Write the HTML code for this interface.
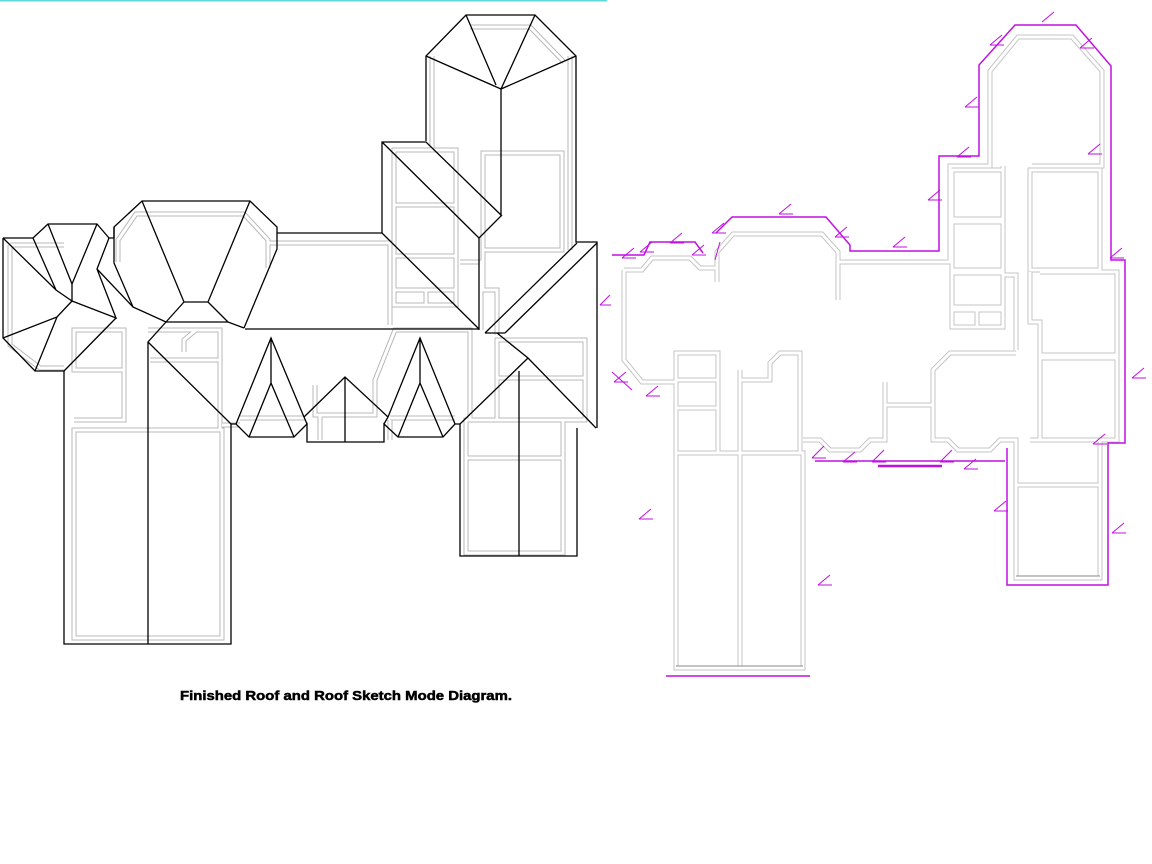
<!DOCTYPE html>
<html><head><meta charset="utf-8"><style>html,body{margin:0;padding:0;background:#fff;}svg{display:block}</style></head>
<body>
<svg width="1152" height="864" viewBox="0 0 1152 864" xmlns="http://www.w3.org/2000/svg">
<rect x="0" y="0" width="607" height="1.5" fill="#5fd8d8"/>

<!-- LEFT: gray plan under roof (double lines) -->
<g fill="none" stroke-linejoin="miter">
 <g stroke="#b8b8b8" stroke-width="5">
  <path d="M10,245 H64 M10,245 V345 L40,368 H64"/>
  <path d="M118,262 V240 L136,214 H244 L268,240 V268"/>
  <path d="M268,243 H390 V325"/>
  <path d="M74,330 H124 V370 H74 Z M74,370 H124 V420 H74 M74,420 H124"/>
  <path d="M148,330 H220 V430 M184,352 V340 L196,330 M150,360 H220"/>
  <path d="M74,430 H222 V638 H74 Z"/>
  <path d="M394,150 H456 V305 H394 Z M394,205 H456 M394,256 H456 M394,290 H456 M426,290 V305"/>
  <path d="M483,153 H562 V250 H483 Z M483,250 V290 H497 V335"/>
  <path d="M460,262 H481 V330"/>
  <path d="M497,340 H585 V420 H497 Z M497,378 H585"/>
  <path d="M466,420 H563 V553 H466 Z M466,458 H563"/>
  <path d="M432,56 V150 M570,56 V250 M470,27 H530 L564,62"/>
  <path d="M222,425 H240 M315,385 V415 H375 V380 L395,330 H470 V420 M320,415 V440 M390,420 V440"/>
  <path d="M240,418 H305 M390,418 H455"/>
 </g>
 <g stroke="#fff" stroke-width="3">
  <path d="M10,245 H64 M10,245 V345 L40,368 H64"/>
  <path d="M118,262 V240 L136,214 H244 L268,240 V268"/>
  <path d="M268,243 H390 V325"/>
  <path d="M74,330 H124 V370 H74 Z M74,370 H124 V420 H74 M74,420 H124"/>
  <path d="M148,330 H220 V430 M184,352 V340 L196,330 M150,360 H220"/>
  <path d="M74,430 H222 V638 H74 Z"/>
  <path d="M394,150 H456 V305 H394 Z M394,205 H456 M394,256 H456 M394,290 H456 M426,290 V305"/>
  <path d="M483,153 H562 V250 H483 Z M483,250 V290 H497 V335"/>
  <path d="M460,262 H481 V330"/>
  <path d="M497,340 H585 V420 H497 Z M497,378 H585"/>
  <path d="M466,420 H563 V553 H466 Z M466,458 H563"/>
  <path d="M432,56 V150 M570,56 V250 M470,27 H530 L564,62"/>
  <path d="M222,425 H240 M315,385 V415 H375 V380 L395,330 H470 V420 M320,415 V440 M390,420 V440"/>
  <path d="M240,418 H305 M390,418 H455"/>
 </g>
</g>

<!-- LEFT: black roof lines -->
<g fill="none" stroke="#000" stroke-width="1.3">
 <path d="M426,141 V56 L466,15 H535 L576,56 V242 H597 V428"/>
 <path d="M426,56 L501,89 L576,56 M466,15 L496,85 M535,15 L501,89 V216 L479,238 V330"/>
 <path d="M382,233 V142 H426 L502,216 M382,142 L479,238"/>
 <path d="M382,233 L479,329 M245,329 H479 M485,333 H505 M485,333 L577,243 M505,333 L597,243"/>
 <path d="M497,333 L528,358 L596,428 M528,358 L460,424 M519,371 V556 M460,424 V556 H577 V428"/>
 <path d="M114,238 V227 L142,201 H250 L277,227 V249 L244,328 M277,233 H382"/>
 <path d="M114,227 V263 L133,307 L166,322 H228 L244,328"/>
 <path d="M142,201 L184,302 H208 L250,201 M184,302 L166,322 M208,302 L228,322"/>
 <path d="M3,238 H33 L48,224 H97 L109,238 H114 M3,238 V338 L35,371 H64 V644 H231 V424"/>
 <path d="M48,224 L72,284 L97,224 M33,238 L56,290 M3,238 L56,290 L72,301 V284 M72,301 L116,318 L97,269 L109,238 M97,269 L133,307"/>
 <path d="M72,301 L57,317 L3,338 M57,317 L35,371 M116,318 L64,371"/>
 <path d="M166,322 L148,342 V644 M148,342 L231,424 H236 L249,437 H294 L307,424 V442 H384 V424 L398,437 H443 L455,424 H460"/>
 <path d="M236,424 L271,338 L304,417 L307,424 M249,437 L271,383 L294,437 M271,338 V383"/>
 <path d="M304,417 L345,377 L388,417 M345,377 V442"/>
 <path d="M388,417 L420,338 L455,424 M398,437 L420,383 L443,437 M420,338 V383 M388,417 L384,424"/>
</g>

<!-- RIGHT: gray plan -->
<g fill="none">
 <g stroke="#c4c4c4" stroke-width="5">
  <path d="M624,270 H642 L652,258 H690 L700,268 H717 V282 M717,268 V252 L733,234 H822 L838,252 V300 M838,262 H950 V166 H990 V71 L1018,37 H1072 L1102,71 V166 H1032 M1003,166 V275 H1016 V350"/>
  <path d="M624,270 V360 L642,382 H676"/>
  <path d="M676,353 H718 V453 H676 Z M676,380 H718 M676,408 H718"/>
  <path d="M740,370 V453 H800 V353 H780 L770,363 V380 H740"/>
  <path d="M676,453 H803 V668 H676 Z M740,453 V668"/>
  <path d="M803,440 H820 L830,450 H860 L870,440 H885 V405 H933 V440 H948 L958,450 H990 L1000,440 H1016 V578 H1100 V485 H1016"/>
  <path d="M885,405 V382 M933,440 V370 L950,353 H1016"/>
  <path d="M952,170 H1003 V219 H952 Z M952,222 H1003 V270 H952 Z M952,273 H1003 V307 H952 Z M952,310 H1003 V327 H952 Z M977,310 V327"/>
  <path d="M1030,170 H1100 V270 H1030 Z M1030,272 V322 H1040 V440 M1040,272 H1117 V355 H1040 M1040,358 H1117 V440 H1100 M1016,440 V485 M1030,440 H1100 V485"/>
 </g>
 <g stroke="#fff" stroke-width="3">
  <path d="M624,270 H642 L652,258 H690 L700,268 H717 V282 M717,268 V252 L733,234 H822 L838,252 V300 M838,262 H950 V166 H990 V71 L1018,37 H1072 L1102,71 V166 H1032 M1003,166 V275 H1016 V350"/>
  <path d="M624,270 V360 L642,382 H676"/>
  <path d="M676,353 H718 V453 H676 Z M676,380 H718 M676,408 H718"/>
  <path d="M740,370 V453 H800 V353 H780 L770,363 V380 H740"/>
  <path d="M676,453 H803 V668 H676 Z M740,453 V668"/>
  <path d="M803,440 H820 L830,450 H860 L870,440 H885 V405 H933 V440 H948 L958,450 H990 L1000,440 H1016 V578 H1100 V485 H1016"/>
  <path d="M885,405 V382 M933,440 V370 L950,353 H1016"/>
  <path d="M952,170 H1003 V219 H952 Z M952,222 H1003 V270 H952 Z M952,273 H1003 V307 H952 Z M952,310 H1003 V327 H952 Z M977,310 V327"/>
  <path d="M1030,170 H1100 V270 H1030 Z M1030,272 V322 H1040 V440 M1040,272 H1117 V355 H1040 M1040,358 H1117 V440 H1100 M1016,440 V485 M1030,440 H1100 V485"/>
 </g>
 <path d="M676,666 H803" stroke="#888" stroke-width="1"/>
 <path d="M1016,576 H1100" stroke="#888" stroke-width="1"/>
</g>

<!-- RIGHT: magenta outline -->
<g fill="none" stroke="#c010e0" stroke-width="1.5">
 <path d="M612,255 H644 L650,242 H695 L703,253 M716,233 L732,217 H826 L850,245 V251 H939 V156 H979 V65 L1015,25 H1076 L1111,66 V260 H1125 V443 H1108 V585 H1007 V448"/>
 <path d="M815,461 H1005"/>
 <path d="M878,466 H942" stroke-width="2.5"/>
 <path d="M666,676 H810"/>
</g>
<g fill="none" stroke="#c010e0" stroke-width="1">
 <path d="M779,214 h14 M779,214 l12,-10 M893,247 h14 M893,247 l12,-10 M928,200 h14 M928,200 l12,-10 M957,157 h14 M957,157 l12,-10 M965,107 h14 M965,107 l12,-10 M990,45 h14 M990,45 l12,-10 M1042,22 l12,-10 M1080,48 h14 M1080,48 l12,-10 M1088,154 h14 M1088,154 l12,-10 M1110,258 h14 M1110,258 l12,-10 M1132,378 h14 M1132,378 l12,-10 M1112,533 h14 M1112,533 l12,-10 M994,511 h14 M994,511 l12,-10 M964,469 h14 M964,469 l12,-10 M940,462 h14 M940,462 l12,-12 M872,462 h14 M872,462 l12,-12 M843,462 h14 M843,462 l12,-10 M812,458 h14 M812,458 l12,-12 M818,585 h14 M818,585 l12,-10 M639,519 h14 M639,519 l12,-10 M614,382 h14 M614,382 l12,-10 M612,372 l20,18 M646,396 h14 M646,396 l12,-10 M600,305 h11 M600,305 l10,-10 M622,258 h14 M622,258 l12,-10 M640,252 h14 M640,252 l12,-10 M670,243 h14 M670,243 l12,-10 M692,255 h14 M692,255 l12,-10 M712,233 h14 M712,233 l12,-10 M715,260 l5,-18 M835,237 h14 M835,237 l12,-10 M1093,444 h14 M1093,444 l12,-10"/>
</g>

<text x="180" y="700" font-family="Liberation Sans, Arial, sans-serif" font-weight="bold" font-size="13" textLength="332" lengthAdjust="spacingAndGlyphs" fill="#000" stroke="#000" stroke-width="0.5">Finished Roof and Roof Sketch Mode Diagram.</text>
</svg>
</body></html>
